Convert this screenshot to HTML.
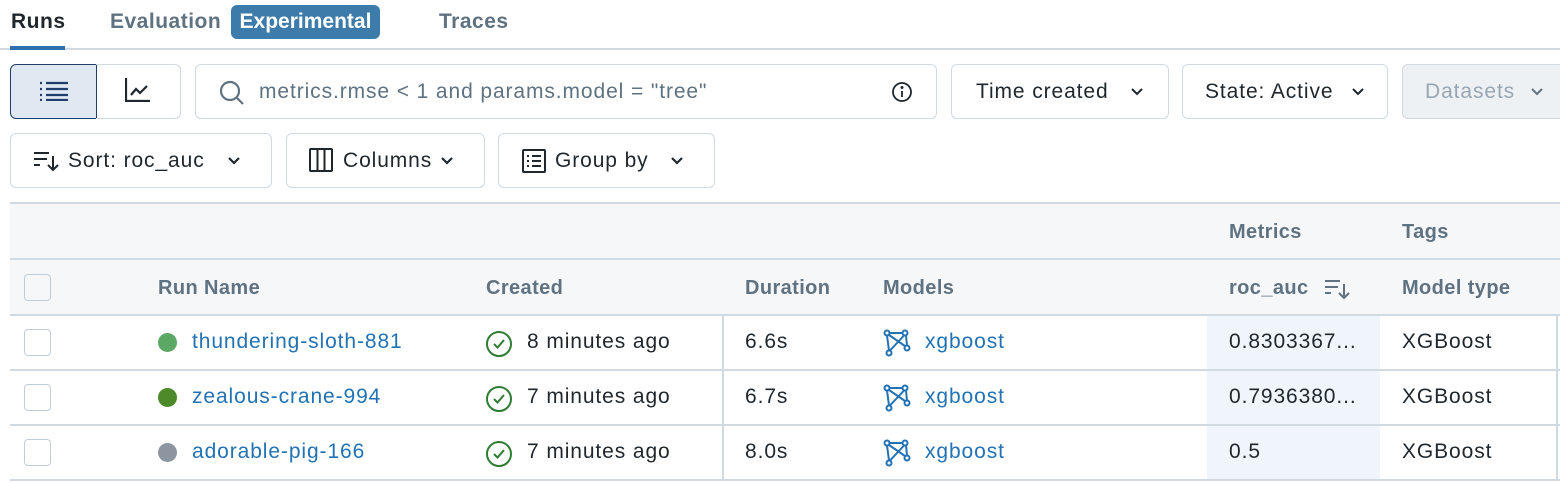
<!DOCTYPE html>
<html><head><meta charset="utf-8"><style>
*{box-sizing:border-box;margin:0;padding:0}
body{width:1560px;height:483px;background:#fff;font-family:"Liberation Sans",sans-serif;font-size:21px;color:#1f272d;position:relative;overflow:hidden}
.a{position:absolute}
.tab{position:absolute;top:10px;font-size:21px;font-weight:bold;color:#5f7281;letter-spacing:0.5px}
.btn{position:absolute;border:1.5px solid #d1d9e1;border-radius:6px;background:#fff;display:flex;align-items:center;font-size:21px;letter-spacing:0.9px;color:#1f272d}
.hd{position:absolute;color:#5f7281;font-size:20px;font-weight:bold;letter-spacing:0.4px}
.cell{position:absolute;font-size:21px;letter-spacing:0.9px}
.link{color:#2272b4}
.cb{position:absolute;left:24px;width:27px;height:27px;border:1.5px solid #c0cdd8;border-radius:4px;background:#fff}
.dot{position:absolute;left:158px;width:19px;height:19px;border-radius:50%}
.hl{position:absolute;left:0;width:1560px;height:1.5px;background:#d1d9e1}
</style></head><body>
<div class="tab" style="left:11px;color:#1f272d">Runs</div>
<div class="tab" style="left:110px">Evaluation</div>
<div class="a" style="left:231px;top:5px;width:149px;height:34px;background:#3d7caa;border-radius:6px;color:#fff;font-weight:bold;font-size:21px;text-align:center;line-height:34px">Experimental</div>
<div class="tab" style="left:439px">Traces</div>
<div class="a" style="left:0;top:48px;width:1560px;height:1.5px;background:#d1d9e1"></div>
<div class="a" style="left:10px;top:46px;width:55px;height:4px;background:#2f6fb0"></div>

<div class="a" style="left:10px;top:64px;width:87px;height:55px;background:#e0e8f2;border:1.5px solid #1f3f6a;border-radius:6px 0 0 6px"></div>
<svg class="a" style="left:40px;top:81px" width="28" height="20" viewBox="0 0 28 20" stroke="#1f3f6a" stroke-width="2.2"><path d="M0 2h2M6 2h22M0 8h2M6 8h22M0 14h2M6 14h22M0 19h2M6 19h22"/></svg>
<div class="a" style="left:96px;top:64px;width:85px;height:55px;border:1.5px solid #d1d9e1;border-left:none;border-radius:0 6px 6px 0"></div>
<svg class="a" style="left:125px;top:78px" width="26" height="24" viewBox="0 0 26 24" fill="none" stroke="#1f272d" stroke-width="2.2"><path d="M1 0v23h24M6 17l5-6 4 4 7-7"/></svg>

<div class="btn" style="left:195px;top:64px;width:742px;height:55px;padding-left:63px;color:#5f7281">metrics.rmse &lt; 1 and params.model = "tree"</div>
<svg class="a" style="left:218px;top:79px" width="28" height="28" viewBox="0 0 28 28" fill="none" stroke="#5f7281" stroke-width="2.2"><circle cx="12" cy="12" r="9"/><path d="M19 19l6 6"/></svg>
<svg class="a" style="left:891px;top:81px" width="22" height="22" viewBox="0 0 22 22" fill="none" stroke="#1f272d" stroke-width="1.8"><circle cx="11" cy="11" r="9"/><path d="M11 10v6"/><circle cx="11" cy="6.5" r=".6" fill="#1f272d"/></svg>

<div class="btn" style="left:951px;top:64px;width:218px;height:55px;padding-left:24px">Time created</div>
<div class="btn" style="left:1182px;top:64px;width:206px;height:55px;padding-left:22px">State: Active</div>
<div class="btn" style="left:1402px;top:64px;width:170px;height:55px;padding-left:22px;background:#eef1f4;color:#98a6b3">Datasets</div>
<svg class="a" style="left:1130px;top:87px" width="14" height="10" viewBox="0 0 14 10" fill="none" stroke="#1f272d" stroke-width="2"><path d="M2 2l5 5 5-5"/></svg>
<svg class="a" style="left:1351px;top:87px" width="14" height="10" viewBox="0 0 14 10" fill="none" stroke="#1f272d" stroke-width="2"><path d="M2 2l5 5 5-5"/></svg>
<svg class="a" style="left:1530px;top:87px" width="14" height="10" viewBox="0 0 14 10" fill="none" stroke="#5f7281" stroke-width="2"><path d="M2 2l5 5 5-5"/></svg>

<div class="btn" style="left:10px;top:133px;width:262px;height:55px;padding-left:57px">Sort: roc_auc</div>
<svg class="a" style="left:33px;top:150px" width="28" height="22" viewBox="0 0 28 22" fill="none" stroke="#1f272d" stroke-width="2"><path d="M1 3h15M1 9h13M1 15h6M20 6v14M15 15l5 5 5-5"/></svg>
<svg class="a" style="left:227px;top:156px" width="14" height="10" viewBox="0 0 14 10" fill="none" stroke="#1f272d" stroke-width="2.2"><path d="M2 2l5 5 5-5"/></svg>
<div class="btn" style="left:286px;top:133px;width:199px;height:55px;padding-left:56px">Columns</div>
<svg class="a" style="left:309px;top:148px" width="24" height="24" viewBox="0 0 24 24" fill="none" stroke="#1f272d" stroke-width="2"><rect x="1" y="1" width="22" height="22" rx="1"/><path d="M8.5 1v22M15.5 1v22"/></svg>
<svg class="a" style="left:440px;top:156px" width="14" height="10" viewBox="0 0 14 10" fill="none" stroke="#1f272d" stroke-width="2.2"><path d="M2 2l5 5 5-5"/></svg>
<div class="btn" style="left:498px;top:133px;width:217px;height:55px;padding-left:56px">Group by</div>
<svg class="a" style="left:522px;top:149px" width="24" height="24" viewBox="0 0 24 24" fill="none" stroke="#1f272d" stroke-width="2"><rect x="1" y="1" width="22" height="22" rx="1"/><path d="M5 7h2M10 7h9M5 12h2M10 12h9M5 17h2M10 17h9"/></svg>
<svg class="a" style="left:670px;top:156px" width="14" height="10" viewBox="0 0 14 10" fill="none" stroke="#1f272d" stroke-width="2.2"><path d="M2 2l5 5 5-5"/></svg>

<!-- table -->
<div class="a" style="left:10px;top:203px;width:1560px;height:112px;background:#f6f7f9"></div>
<div class="a" style="left:1207px;top:315px;width:173px;height:165px;background:#f0f5fc"></div>
<div class="hl" style="left:10px;top:202px"></div>
<div class="hl" style="left:10px;top:258px"></div>
<div class="hl" style="left:10px;top:314px"></div>
<div class="hl" style="left:10px;top:369px"></div>
<div class="hl" style="left:10px;top:424px"></div>
<div class="hl" style="left:10px;top:479px"></div>
<div class="a" style="left:722px;top:315px;width:1.5px;height:165px;background:#d1d9e1"></div>
<div class="a" style="left:1556px;top:315px;width:1.5px;height:165px;background:#d1d9e1"></div>

<div class="hd" style="left:1229px;top:221px">Metrics</div>
<div class="hd" style="left:1402px;top:221px">Tags</div>
<div class="cb" style="top:274px;background:#f6f7f9"></div>
<div class="hd" style="left:158px;top:277px">Run Name</div>
<div class="hd" style="left:486px;top:277px">Created</div>
<div class="hd" style="left:745px;top:277px">Duration</div>
<div class="hd" style="left:883px;top:277px">Models</div>
<div class="hd" style="left:1229px;top:277px">roc_auc</div>
<svg class="a" style="left:1324px;top:278px" width="28" height="22" viewBox="0 0 28 22" fill="none" stroke="#5f7281" stroke-width="2"><path d="M1 3h15M1 9h13M1 15h6M20 6v14M15 15l5 5 5-5"/></svg>
<div class="hd" style="left:1402px;top:277px">Model type</div>

<!-- rows -->
<div class="cb" style="top:329px"></div><div class="cb" style="top:384px"></div><div class="cb" style="top:439px"></div>
<div class="dot" style="top:333px;background:#5ba865"></div>
<div class="dot" style="top:388px;background:#4c8a2a"></div>
<div class="dot" style="top:443px;background:#8d96a0"></div>
<div class="cell link" style="left:192px;top:330px">thundering-sloth-881</div>
<div class="cell link" style="left:192px;top:385px">zealous-crane-994</div>
<div class="cell link" style="left:192px;top:440px">adorable-pig-166</div>

<svg class="a" style="left:485px;top:330px" width="28" height="28" viewBox="0 0 28 28" fill="none" stroke="#2e7d32" stroke-width="2"><circle cx="14" cy="14" r="12"/><path d="M9 14l3.5 3.5L19 10"/></svg>
<svg class="a" style="left:485px;top:385px" width="28" height="28" viewBox="0 0 28 28" fill="none" stroke="#2e7d32" stroke-width="2"><circle cx="14" cy="14" r="12"/><path d="M9 14l3.5 3.5L19 10"/></svg>
<svg class="a" style="left:485px;top:440px" width="28" height="28" viewBox="0 0 28 28" fill="none" stroke="#2e7d32" stroke-width="2"><circle cx="14" cy="14" r="12"/><path d="M9 14l3.5 3.5L19 10"/></svg>
<div class="cell" style="left:527px;top:330px">8 minutes ago</div>
<div class="cell" style="left:527px;top:385px">7 minutes ago</div>
<div class="cell" style="left:527px;top:440px">7 minutes ago</div>
<div class="cell" style="left:745px;top:330px">6.6s</div>
<div class="cell" style="left:745px;top:385px">6.7s</div>
<div class="cell" style="left:745px;top:440px">8.0s</div>

<svg class="a" style="left:883px;top:329px" width="28" height="28" viewBox="0 0 28 28" fill="none" stroke="#2272b4" stroke-width="2"><circle cx="4" cy="4" r="2.5"/><circle cx="22" cy="4" r="2.5"/><circle cx="24" cy="19" r="2.5"/><circle cx="6" cy="24" r="2.5"/><path d="M6 6l16 11M21 6.5l-14 15M6.5 4h13M23 6.5l1 10M4 6.5l2 15"/></svg>
<svg class="a" style="left:883px;top:384px" width="28" height="28" viewBox="0 0 28 28" fill="none" stroke="#2272b4" stroke-width="2"><circle cx="4" cy="4" r="2.5"/><circle cx="22" cy="4" r="2.5"/><circle cx="24" cy="19" r="2.5"/><circle cx="6" cy="24" r="2.5"/><path d="M6 6l16 11M21 6.5l-14 15M6.5 4h13M23 6.5l1 10M4 6.5l2 15"/></svg>
<svg class="a" style="left:883px;top:439px" width="28" height="28" viewBox="0 0 28 28" fill="none" stroke="#2272b4" stroke-width="2"><circle cx="4" cy="4" r="2.5"/><circle cx="22" cy="4" r="2.5"/><circle cx="24" cy="19" r="2.5"/><circle cx="6" cy="24" r="2.5"/><path d="M6 6l16 11M21 6.5l-14 15M6.5 4h13M23 6.5l1 10M4 6.5l2 15"/></svg>
<div class="cell link" style="left:925px;top:330px">xgboost</div>
<div class="cell link" style="left:925px;top:385px">xgboost</div>
<div class="cell link" style="left:925px;top:440px">xgboost</div>

<div class="cell" style="left:1229px;top:330px">0.8303367...</div>
<div class="cell" style="left:1229px;top:385px">0.7936380...</div>
<div class="cell" style="left:1229px;top:440px">0.5</div>
<div class="cell" style="left:1402px;top:330px">XGBoost</div>
<div class="cell" style="left:1402px;top:385px">XGBoost</div>
<div class="cell" style="left:1402px;top:440px">XGBoost</div>
</body></html>
